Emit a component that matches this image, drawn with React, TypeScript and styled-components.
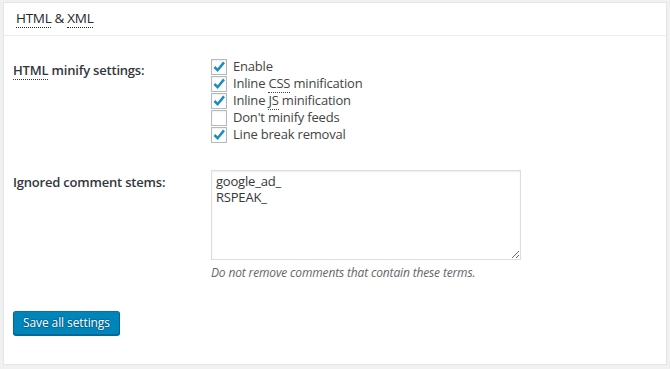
import styled, { createGlobalStyle } from "styled-components"

const GlobalStyle = createGlobalStyle`
  html, body {
    margin: 0;
    padding: 0;
    background: #f1f1f1;
  }

  body {
    font-family: "Open Sans", "Liberation Sans", sans-serif;
    font-size: 13px;
    letter-spacing: -0.2px;
    color: #444;
  }
`

const Abbr = styled.abbr`
  text-decoration: none;
  border-bottom: 1px dotted currentColor;
`

// Data
const minifyOptions = [
  { key: "enable", label: () => <>Enable</>, checked: true },
  { key: "css", label: () => <>Inline <Abbr title="Cascading Style Sheets">CSS</Abbr> minification</>, checked: true },
  { key: "js", label: () => <>Inline <Abbr title="JavaScript">JS</Abbr> minification</>, checked: true },
  { key: "feeds", label: () => <>Don't minify feeds</>, checked: false },
  { key: "linebreak", label: () => <>Line break removal</>, checked: true },
]

const CheckMark = () => (
  <svg width="16" height="16" viewBox="0 0 16 16" aria-hidden="true">
    <path d="M3.4 8 L6.6 11.2 L13 3.4" fill="none" stroke="#1e8cbe" strokeWidth="2.5" />
  </svg>
)

const App = () => {
  return (
    <>
      <GlobalStyle />
      <Postbox>
        <Header>
          <Abbr title="HyperText Markup Language">HTML</Abbr> &amp; <Abbr title="eXtensible Markup Language">XML</Abbr>
        </Header>

        <Inside>
          <FormRow>
            <RowLabel $offset={26}>
              <Abbr title="HyperText Markup Language">HTML</Abbr> minify settings:
            </RowLabel>
            <OptionList $offset={22}>
              {minifyOptions.map(({ key, label, checked }) => (
                <Option key={key}>
                  <CheckBox>{checked && <CheckMark />}</CheckBox>
                  <span>{label()}</span>
                </Option>
              ))}
            </OptionList>
          </FormRow>

          <FormRow>
            <RowLabel $offset={18}>Ignored comment stems:</RowLabel>
            <Field $offset={14}>
              <TextArea defaultValue={"google_ad_\nRSPEAK_"} />
              <Description>Do not remove comments that contain these terms.</Description>
            </Field>
          </FormRow>

          <SubmitRow>
            <Button type="button">Save all settings</Button>
          </SubmitRow>
        </Inside>
      </Postbox>
    </>
  )
}

const Postbox = styled.div`
  box-sizing: border-box;
  width: 664px;
  height: 363px;
  margin: 2px 0 0 3px;
  background: #fff;
  border: 1px solid #e5e5e5;
  box-shadow: 0 1px 1px rgba(0, 0, 0, 0.04);
`

const Header = styled.h3`
  box-sizing: border-box;
  height: 33px;
  margin: 0;
  padding: 5px 12px 0;
  border-bottom: 1px solid #eee;
  font-size: 13.5px;
  font-weight: 400;
  letter-spacing: -0.3px;
  line-height: 20px;
  color: #23282d;
`

const Inside = styled.div`
  padding: 0 9px;
`

const FormRow = styled.div`
  display: grid;
  grid-template-columns: 198px 1fr;
  align-items: start;
`

const RowLabel = styled.div<{ $offset: number }>`
  padding-top: ${({ $offset }) => $offset}px;
  font-weight: 600;
  line-height: 17px;
  color: #32373c;
`

const OptionList = styled.div<{ $offset: number }>`
  display: flex;
  flex-direction: column;
  padding-top: ${({ $offset }) => $offset}px;
  padding-bottom: 13px;
`

const Option = styled.label`
  display: flex;
  align-items: center;
  gap: 6px;
  height: 17px;
  line-height: 17px;
  color: #444;
`

const CheckBox = styled.span`
  box-sizing: border-box;
  display: flex;
  align-items: center;
  justify-content: center;
  width: 16px;
  height: 16px;
  background: #fff;
  border: 1px solid #b4b9be;
  box-shadow: inset 0 1px 2px rgba(0, 0, 0, 0.07);

  svg {
    flex: none;
  }
`

const Field = styled.div<{ $offset: number }>`
  display: flex;
  flex-direction: column;
  padding-top: ${({ $offset }) => $offset}px;
`

const TextArea = styled.textarea`
  box-sizing: border-box;
  width: 310px;
  height: 90px;
  margin: 0;
  padding: 2px 4px;
  border: 1px solid #ddd;
  box-shadow: inset 0 1px 2px rgba(0, 0, 0, 0.07);
  font-family: "Open Sans", "Liberation Sans", sans-serif;
  font-size: 13px;
  letter-spacing: -0.2px;
  line-height: 16px;
  color: #32373c;
  outline: none;
`

const Description = styled.p`
  margin: 4px 0 0;
  font-size: 12px;
  font-style: italic;
  letter-spacing: -0.15px;
  line-height: 17px;
  color: #666;
`

const SubmitRow = styled.div`
  padding-top: 30px;
`

const Button = styled.button`
  box-sizing: border-box;
  height: 24px;
  margin: 0;
  padding: 0 9px 1px;
  background: #0085ba;
  border: 1px solid #0073aa;
  border-color: #0073aa #006799 #006799;
  border-radius: 3px;
  box-shadow: 0 1px 0 #006799;
  font-family: "Open Sans", "Liberation Sans", sans-serif;
  font-size: 12px;
  letter-spacing: -0.1px;
  line-height: 20px;
  color: #fff;
  text-shadow: 0 -1px 1px #006799, 1px 0 1px #006799, 0 1px 1px #006799, -1px 0 1px #006799;
  cursor: pointer;
`

export default App
